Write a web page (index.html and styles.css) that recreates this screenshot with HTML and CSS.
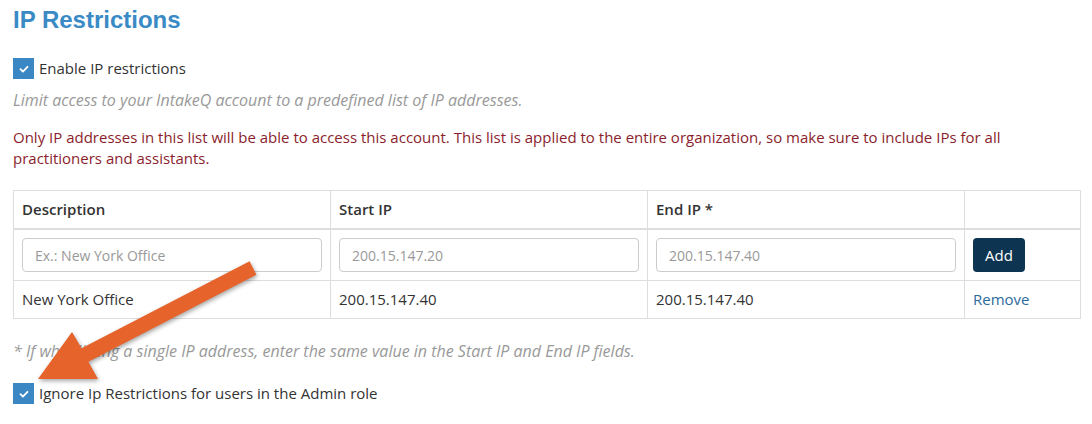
FILE: index.html
```html
<!DOCTYPE html>
<html lang="en">
<head>
  <meta charset="UTF-8" />
  <title>IP Restrictions</title>
  <link rel="stylesheet" href="styles.css">
</head>
<body>

  <div class="page">
    <h1>IP Restrictions</h1>

    <label class="check">
      <span class="box"><svg viewBox="0 0 12 12" width="12" height="12"><path d="M2.5 6.2l2.4 2.4 4.6-4.8" fill="none" stroke="#fff" stroke-width="1.8" stroke-linecap="round" stroke-linejoin="round"/></svg></span>
      Enable IP restrictions
    </label>

    <p class="hint">Limit access to your IntakeQ account to a predefined list of IP addresses.</p>

    <p class="warning">Only IP addresses in this list will be able to access this account. This list is applied to the entire organization, so make sure to include IPs for all practitioners and assistants.</p>

    <table class="ip-table">
      <thead>
        <tr>
          <th class="col-desc">Description</th>
          <th class="col-ip">Start IP</th>
          <th class="col-ip">End IP *</th>
          <th></th>
        </tr>
      </thead>
      <tbody>
        <tr>
          <td><input type="text" placeholder="Ex.: New York Office"></td>
          <td><input type="text" placeholder="200.15.147.20"></td>
          <td><input type="text" placeholder="200.15.147.40"></td>
          <td><button class="btn-add">Add</button></td>
        </tr>
        <tr>
          <td>New York Office</td>
          <td>200.15.147.40</td>
          <td>200.15.147.40</td>
          <td><a href="#" class="remove">Remove</a></td>
        </tr>
      </tbody>
    </table>

    <p class="hint note">* If whitelisting a single IP address, enter the same value in the Start IP and End IP fields.</p>

    <label class="check">
      <span class="box"><svg viewBox="0 0 12 12" width="12" height="12"><path d="M2.5 6.2l2.4 2.4 4.6-4.8" fill="none" stroke="#fff" stroke-width="1.8" stroke-linecap="round" stroke-linejoin="round"/></svg></span>
      Ignore Ip Restrictions for users in the Admin role
    </label>
  </div>

  <svg class="arrow" width="1092" height="424" viewBox="0 0 1092 424">
    <polygon points="249.6,261.3 81.6,348.3 72,332 38,379 98,379 88.4,361.7 256.4,274.7" fill="#e6632b"/>
  </svg>

</body>
</html>
```

FILE: styles.css
```css
body {
  margin: 0;
  font-family: "Open Sans", Arial, sans-serif;
  font-size: 15px;
  color: #333;
  background: #fff;
}

.page {
  width: 1068px;
  padding: 0 11px 0 13px;
}

h1 {
  margin: 7px 0 0;
  font-family: "Liberation Sans", Arial, sans-serif;
  font-size: 24px;
  line-height: 26px;
  font-weight: bold;
  color: #3a8ac6;
}

.check {
  display: flex;
  align-items: center;
  gap: 5px;
  line-height: 21px;
}

.page > .check:first-of-type {
  margin-top: 25px;
}

.box {
  width: 21px;
  height: 21px;
  background: #3a87c4;
  display: flex;
  align-items: center;
  justify-content: center;
  flex-shrink: 0;
}

.hint {
  margin: 10px 0 0;
  font-size: 16px;
  font-style: italic;
  color: #999;
  line-height: 22px;
}

.warning {
  margin: 16px 0 0;
  font-size: 15px;
  color: #8b1e2c;
  line-height: 21px;
}

.ip-table {
  margin-top: 21px;
  width: 100%;
  border-collapse: collapse;
  border: 1px solid #ddd;
}

.ip-table th,
.ip-table td {
  border: 1px solid #ddd;
  padding: 8px;
  text-align: left;
  line-height: 21px;
}

.ip-table th {
  font-weight: 600;
  border-bottom-width: 2px;
}

.col-desc,
.col-ip {
  width: 300px;
}

.ip-table input {
  display: block;
  box-sizing: border-box;
  width: 100%;
  height: 34px;
  padding: 6px 12px;
  border: 1px solid #ccc;
  border-radius: 4px;
  font-family: inherit;
  font-size: 14px;
  color: #333;
}

.ip-table input::placeholder {
  color: #999;
}

.btn-add {
  height: 34px;
  padding: 0 12px;
  border: none;
  border-radius: 4px;
  background: #0d3450;
  color: #fff;
  font-family: inherit;
  font-size: 15px;
}

.remove {
  color: #2c6a9c;
  text-decoration: none;
}

.note {
  margin-top: 21px;
}

.note + .check {
  margin-top: 21px;
}

.arrow {
  position: absolute;
  top: 0;
  left: 0;
  pointer-events: none;
  filter: drop-shadow(1px 2px 2px rgba(0, 0, 0, 0.35));
}
```
